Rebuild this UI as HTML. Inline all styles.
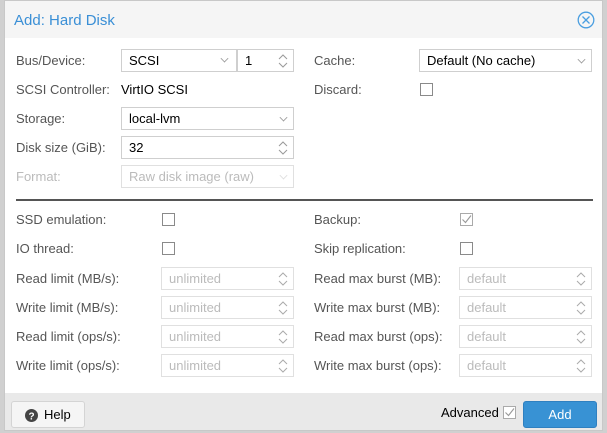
<!DOCTYPE html>
<html><head><style>
*{box-sizing:border-box;margin:0;padding:0}
body{width:607px;height:433px;background:#d0d0d0;font-family:"Liberation Sans",sans-serif;font-size:13px;position:relative;overflow:hidden}
.win{position:absolute;left:4px;top:0;width:599px;height:431px;background:#fff;border:1px solid #c8c8c8}
.hdr{position:absolute;left:0;top:0;width:100%;height:37px;background:#f5f5f5}
.title{position:absolute;left:9px;top:11px;font-size:15px;color:#3a8fd6}
.a{position:absolute}
.l{position:absolute;color:#555;line-height:16px;margin-top:1px}
.v{position:absolute;color:#000;line-height:16px;margin-top:1px}
.f{position:absolute;height:23px;border:1px solid #cfcfcf;background:#fff;padding-left:7px;line-height:21px;color:#000}
.f.d{color:#bbb;border-color:#e0e0e0}
.cb{position:absolute;width:13px;height:13px;border:1px solid #8a8a8a;background:#fff}
.arr{position:absolute;right:6px;top:6px;width:7px;height:7px;border-right:1px solid #999;border-bottom:1px solid #999;transform:rotate(45deg) scale(.8)}
.sp{position:absolute;right:5px;top:3px;width:10px;height:16px}
</style></head><body>
<div class="win">
<div class="hdr"><div class="title">Add: Hard Disk</div>
<svg class="a" style="left:572px;top:10px" width="18" height="18" viewBox="0 0 18 18"><circle cx="9" cy="9" r="7.8" fill="none" stroke="#4a9ee0" stroke-width="1.3"/><path d="M5.5 5.5L12.5 12.5M12.5 5.5L5.5 12.5" stroke="#4a9ee0" stroke-width="1.3"/></svg>
</div>
</div>
<div class="l" style="left:16px;top:52px">Bus/Device:</div>
<div class="f" style="left:121px;top:49px;width:116px">SCSI<span class="arr" style="right:8px;top:5px"></span></div>
<div class="f" style="left:237px;top:49px;width:57px">1<svg class="sp" viewBox="0 0 10 16"><path d="M1 6L5 2L9 6M1 10L5 14L9 10" fill="none" stroke="#999"/></svg></div>
<div class="l" style="left:16px;top:81px">SCSI Controller:</div>
<div class="v" style="left:121px;top:81px">VirtIO SCSI</div>
<div class="l" style="left:16px;top:110px">Storage:</div>
<div class="f" style="left:121px;top:107px;width:173px">local-lvm<span class="arr"></span></div>
<div class="l" style="left:16px;top:139px">Disk size (GiB):</div>
<div class="f" style="left:121px;top:136px;width:173px">32<svg class="sp" viewBox="0 0 10 16"><path d="M1 6L5 2L9 6M1 10L5 14L9 10" fill="none" stroke="#999"/></svg></div>
<div class="l" style="left:16px;top:168px;color:#bbb">Format:</div>
<div class="f d" style="left:121px;top:165px;width:173px">Raw disk image (raw)<span class="arr" style="border-color:#ddd"></span></div>
<div class="l" style="left:314px;top:52px">Cache:</div>
<div class="f" style="left:419px;top:49px;width:173px">Default (No cache)<span class="arr"></span></div>
<div class="l" style="left:314px;top:81px">Discard:</div>
<div class="cb" style="left:420px;top:83px"></div>
<div class="a" style="left:16px;top:199px;width:577px;height:2px;background:#555"></div>
<div class="l" style="left:16px;top:211px">SSD emulation:</div><div class="cb" style="left:162px;top:213px"></div>
<div class="l" style="left:16px;top:240px">IO thread:</div><div class="cb" style="left:162px;top:242px"></div>
<div class="l" style="left:16px;top:270px">Read limit (MB/s):</div>
<div class="l" style="left:16px;top:299px">Write limit (MB/s):</div>
<div class="l" style="left:16px;top:328px">Read limit (ops/s):</div>
<div class="l" style="left:16px;top:357px">Write limit (ops/s):</div>
<div class="f d" style="left:161px;top:267px;width:133px">unlimited<svg class="sp" viewBox="0 0 10 16"><path d="M1 6L5 2L9 6M1 10L5 14L9 10" fill="none" stroke="#aaa"/></svg></div>
<div class="f d" style="left:161px;top:296px;width:133px">unlimited<svg class="sp" viewBox="0 0 10 16"><path d="M1 6L5 2L9 6M1 10L5 14L9 10" fill="none" stroke="#aaa"/></svg></div>
<div class="f d" style="left:161px;top:325px;width:133px">unlimited<svg class="sp" viewBox="0 0 10 16"><path d="M1 6L5 2L9 6M1 10L5 14L9 10" fill="none" stroke="#aaa"/></svg></div>
<div class="f d" style="left:161px;top:354px;width:133px">unlimited<svg class="sp" viewBox="0 0 10 16"><path d="M1 6L5 2L9 6M1 10L5 14L9 10" fill="none" stroke="#aaa"/></svg></div>
<div class="l" style="left:314px;top:211px">Backup:</div>
<div class="cb" style="left:460px;top:213px;border-color:#aaa"><svg style="position:absolute;left:0;top:0" width="11" height="11" viewBox="0 0 11 11"><path d="M1.5 5.5L4.5 8.5L10 1.5" fill="none" stroke="#999" stroke-width="1.1"/></svg></div>
<div class="l" style="left:314px;top:240px">Skip replication:</div><div class="cb" style="left:460px;top:242px"></div>
<div class="l" style="left:314px;top:270px">Read max burst (MB):</div>
<div class="l" style="left:314px;top:299px">Write max burst (MB):</div>
<div class="l" style="left:314px;top:328px">Read max burst (ops):</div>
<div class="l" style="left:314px;top:357px">Write max burst (ops):</div>
<div class="f d" style="left:459px;top:267px;width:133px">default<svg class="sp" viewBox="0 0 10 16"><path d="M1 6L5 2L9 6M1 10L5 14L9 10" fill="none" stroke="#aaa"/></svg></div>
<div class="f d" style="left:459px;top:296px;width:133px">default<svg class="sp" viewBox="0 0 10 16"><path d="M1 6L5 2L9 6M1 10L5 14L9 10" fill="none" stroke="#aaa"/></svg></div>
<div class="f d" style="left:459px;top:325px;width:133px">default<svg class="sp" viewBox="0 0 10 16"><path d="M1 6L5 2L9 6M1 10L5 14L9 10" fill="none" stroke="#aaa"/></svg></div>
<div class="f d" style="left:459px;top:354px;width:133px">default<svg class="sp" viewBox="0 0 10 16"><path d="M1 6L5 2L9 6M1 10L5 14L9 10" fill="none" stroke="#aaa"/></svg></div>
<div class="a" style="left:5px;top:393px;width:597px;height:37px;background:#e9e9e9"></div>
<div class="a" style="left:11px;top:401px;width:74px;height:27px;background:#f5f5f5;border:1px solid #d4d4d4;border-radius:3px">
<svg class="a" style="left:13px;top:7px" width="13" height="13" viewBox="0 0 13 13"><circle cx="6.5" cy="6.5" r="6.5" fill="#444"/><text x="6.5" y="10.5" font-size="10" font-weight="bold" text-anchor="middle" fill="#fff" font-family="Liberation Sans">?</text></svg>
<span class="a" style="left:32px;top:5px;color:#000">Help</span></div>
<div class="a" style="left:441px;top:405px;color:#000">Advanced</div>
<div class="cb" style="left:503px;top:406px;border-color:#aaa"><svg style="position:absolute;left:0;top:0" width="11" height="11" viewBox="0 0 11 11"><path d="M1.5 5.5L4.5 8.5L10 1.5" fill="none" stroke="#999" stroke-width="1.1"/></svg></div>
<div class="a" style="left:523px;top:401px;width:74px;height:27px;background:#3892d4;border:1px solid #2f80c0;border-radius:3px;color:#fff;text-align:center;line-height:25px">Add</div>
</body></html>
